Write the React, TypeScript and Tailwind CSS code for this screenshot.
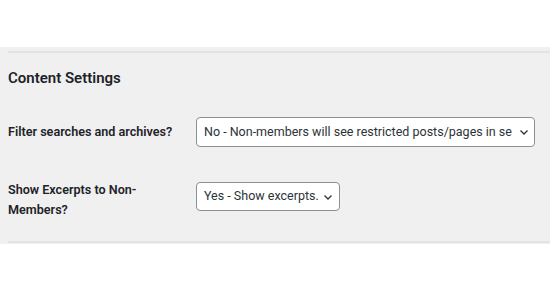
export default function App() {
  return (
    <div className="w-[550px] h-[285px] bg-white" style={{ fontFamily: 'Roboto, "Liberation Sans", Arial, sans-serif' }}>
      <div className="h-[47px]" />
      <div className="bg-[#f0f0f1] pl-2 pt-1 pb-px">
        <div className="h-[2px] bg-[#e3e3e5]" />
        <h2 className="mt-[15px] text-[15px] leading-5 font-semibold text-[#1d2327]">Content Settings</h2>
        <div className="mt-[29px] flex items-center">
          <div className="w-[188px] text-[12.6px] leading-5 font-semibold text-[#1d2327]">Filter searches and archives?</div>
          <div className="w-[339px] h-[30px] border border-[#8c8f94] rounded-[4px] bg-white flex items-center pl-[7px] pr-[5px] text-[12.5px] text-[#2c3338] overflow-hidden">
            <span className="whitespace-nowrap overflow-hidden flex-1">No - Non-members will see restricted posts/pages in searches and archives.</span>
            <svg width="10" height="10" viewBox="0 0 10 10" className="ml-[7px] shrink-0">
              <path d="M1.5 3.5 L5 7 L8.5 3.5" fill="none" stroke="#2c3338" strokeWidth="1.3" />
            </svg>
          </div>
        </div>
        <div className="mt-[33px] mb-[21px] flex items-start">
          <div className="w-[188px] pr-10 text-[12.6px] leading-5 font-semibold text-[#1d2327]">Show Excerpts to Non-Members?</div>
          <div className="mt-[2px] w-[144px] h-[29px] border border-[#8c8f94] rounded-[4px] bg-white flex items-center justify-between pl-[7px] pr-[6px] text-[12.5px] text-[#2c3338]">
            <span className="whitespace-nowrap">Yes - Show excerpts.</span>
            <svg width="10" height="10" viewBox="0 0 10 10" className="shrink-0">
              <path d="M1.5 3.5 L5 7 L8.5 3.5" fill="none" stroke="#2c3338" strokeWidth="1.3" />
            </svg>
          </div>
        </div>
        <div className="h-[2px] bg-[#e3e3e5]" />
      </div>
    </div>
  )
}
